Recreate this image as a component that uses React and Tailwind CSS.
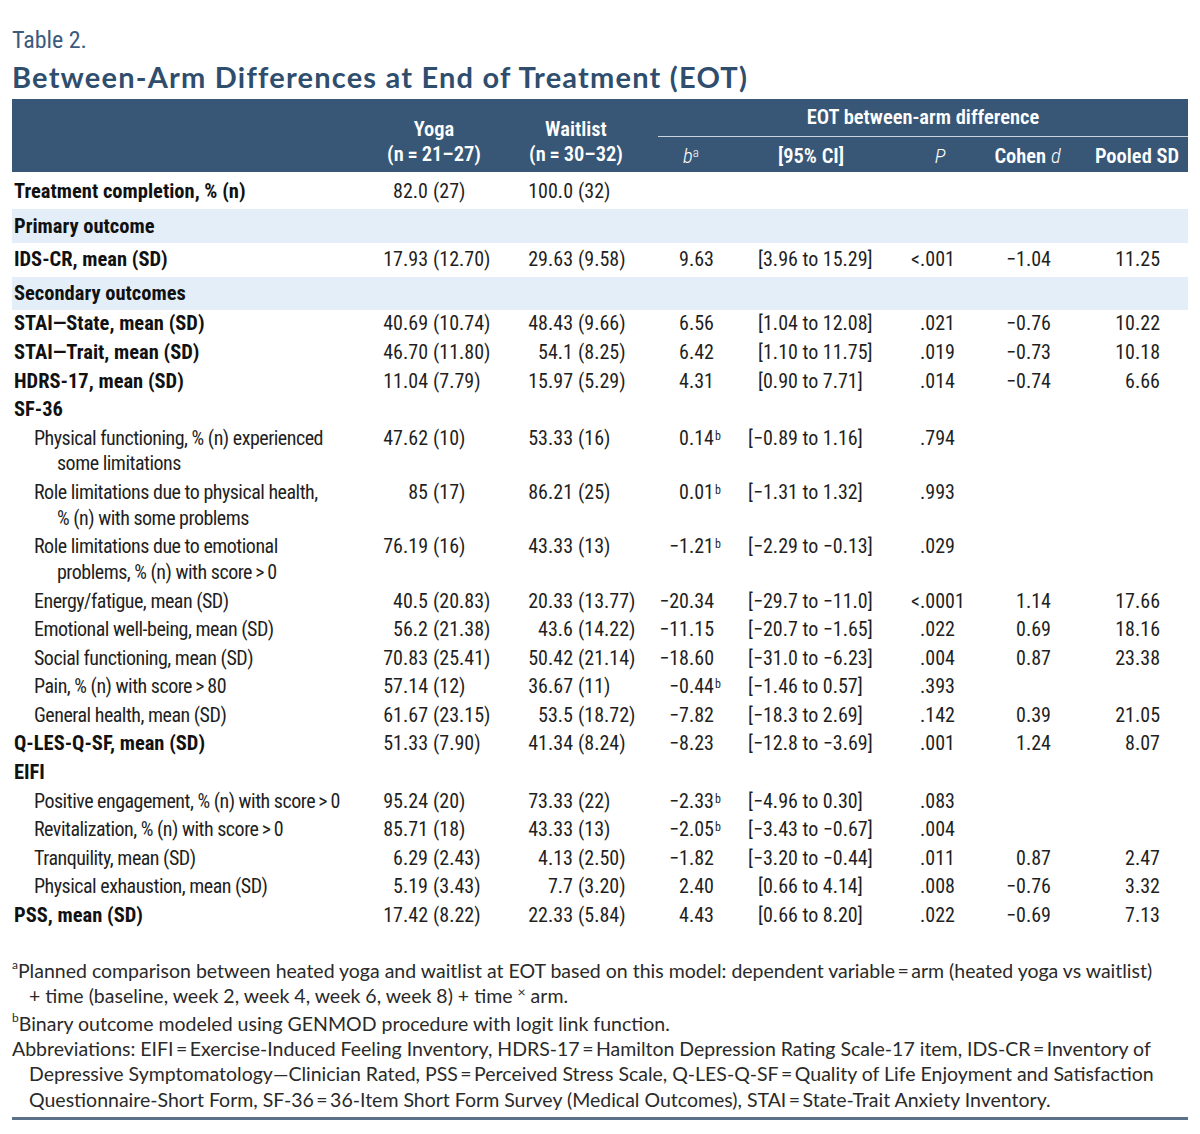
/*
  Table 2: between-arm differences at end of treatment (EOT)
  One grid template shared by header and body rows so every column lines up.
*/

const COLS = "grid grid-cols-[358px_145px_140px_80px_160px_90px_85px_118px]";
const T = "\u2009"; // thin space used around = and >

const ROWS = [
  { kind: "row", h: "h-[37px] pt-[7px]", label: ["Treatment completion, % (n)"], bold: true, yoga: "82.0 (27)", wait: "100.0 (32)" },
  { kind: "band", h: "h-[34px]", label: "Primary outcome" },
  { kind: "row", h: "h-[34px] items-center", label: ["IDS-CR, mean (SD)"], bold: true, yoga: "17.93 (12.70)", wait: "29.63 (9.58)", b: "9.63", ci: "[3.96 to 15.29]", p: "<.001", d: "−1.04", sd: "11.25" },
  { kind: "band", h: "h-[33px]", label: "Secondary outcomes" },
  { kind: "row", label: ["STAI—State, mean (SD)"], bold: true, yoga: "40.69 (10.74)", wait: "48.43 (9.66)", b: "6.56", ci: "[1.04 to 12.08]", p: ".021", d: "−0.76", sd: "10.22" },
  { kind: "row", label: ["STAI—Trait, mean (SD)"], bold: true, yoga: "46.70 (11.80)", wait: "54.1 (8.25)", b: "6.42", ci: "[1.10 to 11.75]", p: ".019", d: "−0.73", sd: "10.18" },
  { kind: "row", label: ["HDRS-17, mean (SD)"], bold: true, yoga: "11.04 (7.79)", wait: "15.97 (5.29)", b: "4.31", ci: "[0.90 to 7.71]", p: ".014", d: "−0.74", sd: "6.66" },
  { kind: "row", label: ["SF-36"], bold: true },
  { kind: "row", label: ["Physical functioning, % (n) experienced", "some limitations"], yoga: "47.62 (10)", wait: "53.33 (16)", b: "0.14^b", ci: "[−0.89 to 1.16]", p: ".794" },
  { kind: "row", label: ["Role limitations due to physical health,", "% (n) with some problems"], yoga: "85 (17)", wait: "86.21 (25)", b: "0.01^b", ci: "[−1.31 to 1.32]", p: ".993" },
  { kind: "row", label: ["Role limitations due to emotional", `problems, % (n) with score${T}>${T}0`], yoga: "76.19 (16)", wait: "43.33 (13)", b: "−1.21^b", ci: "[−2.29 to −0.13]", p: ".029" },
  { kind: "row", label: ["Energy/fatigue, mean (SD)"], yoga: "40.5 (20.83)", wait: "20.33 (13.77)", b: "−20.34", ci: "[−29.7 to −11.0]", p: "<.0001", d: "1.14", sd: "17.66" },
  { kind: "row", label: ["Emotional well-being, mean (SD)"], yoga: "56.2 (21.38)", wait: "43.6 (14.22)", b: "−11.15", ci: "[−20.7 to −1.65]", p: ".022", d: "0.69", sd: "18.16" },
  { kind: "row", label: ["Social functioning, mean (SD)"], yoga: "70.83 (25.41)", wait: "50.42 (21.14)", b: "−18.60", ci: "[−31.0 to −6.23]", p: ".004", d: "0.87", sd: "23.38" },
  { kind: "row", label: [`Pain, % (n) with score${T}>${T}80`], yoga: "57.14 (12)", wait: "36.67 (11)", b: "−0.44^b", ci: "[−1.46 to 0.57]", p: ".393" },
  { kind: "row", label: ["General health, mean (SD)"], yoga: "61.67 (23.15)", wait: "53.5 (18.72)", b: "−7.82", ci: "[−18.3 to 2.69]", p: ".142", d: "0.39", sd: "21.05" },
  { kind: "row", label: ["Q-LES-Q-SF, mean (SD)"], bold: true, yoga: "51.33 (7.90)", wait: "41.34 (8.24)", b: "−8.23", ci: "[−12.8 to −3.69]", p: ".001", d: "1.24", sd: "8.07" },
  { kind: "row", label: ["EIFI"], bold: true },
  { kind: "row", label: [`Positive engagement, % (n) with score${T}>${T}0`], yoga: "95.24 (20)", wait: "73.33 (22)", b: "−2.33^b", ci: "[−4.96 to 0.30]", p: ".083" },
  { kind: "row", label: [`Revitalization, % (n) with score${T}>${T}0`], yoga: "85.71 (18)", wait: "43.33 (13)", b: "−2.05^b", ci: "[−3.43 to −0.67]", p: ".004" },
  { kind: "row", label: ["Tranquility, mean (SD)"], yoga: "6.29 (2.43)", wait: "4.13 (2.50)", b: "−1.82", ci: "[−3.20 to −0.44]", p: ".011", d: "0.87", sd: "2.47" },
  { kind: "row", label: ["Physical exhaustion, mean (SD)"], yoga: "5.19 (3.43)", wait: "7.7 (3.20)", b: "2.40", ci: "[0.66 to 4.14]", p: ".008", d: "−0.76", sd: "3.32" },
  { kind: "row", label: ["PSS, mean (SD)"], bold: true, yoga: "17.42 (8.22)", wait: "22.33 (5.84)", b: "4.43", ci: "[0.66 to 8.20]", p: ".022", d: "−0.69", sd: "7.13" },
];

function MeanCell({ value }) {
  if (!value) return <div />;
  const [num, paren] = value.split(" ");
  return (
    <div className="flex">
      <span className="w-[58px] text-right">{num}</span>
      <span className="pl-[5px]">{paren}</span>
    </div>
  );
}

function BCell({ value }) {
  if (!value) return <div />;
  const [num, sup] = value.split("^");
  return (
    <div className="flex">
      <span className="w-[59px] text-right">{num}</span>
      {sup && <span className="text-[12px] leading-none pt-[4px] pl-[1px]">{sup}</span>}
    </div>
  );
}

function SplitCell({ value, prefixes, width }) {
  if (!value) return <div />;
  const prefix = prefixes.find((p) => value.startsWith(p)) || "";
  return (
    <div className="flex">
      <span className={width + " text-right"}>{prefix}</span>
      <span>{value.slice(prefix.length)}</span>
    </div>
  );
}

function Row({ row }) {
  const labelClass = row.bold
    ? "font-bold pl-[2px] text-[#111] text-[20.5px]"
    : "pl-[22px] text-[20px] tracking-[-0.5px]";
  return (
    <div className={COLS + " " + (row.h || "py-[1.45px]") + " leading-[25.7px] text-[#1f1f1f]"}>
      <div className={labelClass + " whitespace-nowrap"}>
        {row.label.map((line, i) => (
          <div key={i} className={i > 0 ? "pl-[23px]" : ""}>
            {line}
          </div>
        ))}
      </div>
      <MeanCell value={row.yoga} />
      <MeanCell value={row.wait} />
      <BCell value={row.b} />
      <SplitCell value={row.ci} prefixes={["[−", "["]} width="w-[28px]" />
      <SplitCell value={row.p} prefixes={["<"]} width="w-[25px]" />
      <div className="text-right pr-[19px]">{row.d}</div>
      <div className="text-right pr-[28px]">{row.sd}</div>
    </div>
  );
}

function Band({ row }) {
  return (
    <div className={row.h + " flex items-center bg-[#e3eef9] pl-[2px] font-bold text-[20.5px] text-[#111]"}>
      {row.label}
    </div>
  );
}

function Header() {
  return (
    <div className={COLS + " grid-rows-[38px_35px] bg-[#385776] text-white text-[20.5px] leading-[25px]"}>
      <div className="row-span-2" />
      <div className="row-span-2 flex flex-col items-center justify-end pb-[5px] pr-[17px] font-semibold">
        <span>Yoga</span>
        <span>(n{T}={T}21–27)</span>
      </div>
      <div className="row-span-2 flex flex-col items-center justify-end pb-[5px] pr-[18px] font-semibold">
        <span>Waitlist</span>
        <span>(n{T}={T}30–32)</span>
      </div>
      <div className="col-span-5 ml-[3px] flex items-center justify-center border-b border-[#c9d4df] font-semibold">
        EOT between-arm difference
      </div>
      <div className="flex items-center justify-center pt-[4px] pr-[8px] italic font-light">
        b<span className="text-[13px] leading-none -mt-[8px] not-italic">a</span>
      </div>
      <div className="flex items-center justify-center pt-[4px] pr-[8px] font-semibold">[95% CI]</div>
      <div className="flex items-center justify-center pt-[4px] italic font-light">P</div>
      <div className="flex items-center justify-center pt-[4px] font-semibold">
        Cohen&nbsp;<span className="italic font-light">d</span>
      </div>
      <div className="flex items-center justify-center pt-[4px] pl-[16px] font-semibold">Pooled SD</div>
    </div>
  );
}

function Sup({ children }) {
  return <span className="text-[12px] align-top leading-[14px]">{children}</span>;
}

function Footnotes() {
  return (
    <div className="mt-[28px] font-['Lato',sans-serif] text-[19.5px] leading-[25.3px] text-[#2a2a2a] whitespace-nowrap">
      <div>
        <Sup>a</Sup>Planned comparison between heated yoga and waitlist at EOT based on this model: dependent variable{T}={T}arm (heated yoga vs waitlist)
      </div>
      <div className="pl-[17px]">
        + time (baseline, week 2, week 4, week 6, week 8) + time <span className="relative -top-[6px] text-[14px]">×</span> arm.
      </div>
      <div>
        <Sup>b</Sup>Binary outcome modeled using GENMOD procedure with logit link function.
      </div>
      <div>
        Abbreviations: EIFI{T}={T}Exercise-Induced Feeling Inventory, HDRS-17{T}={T}Hamilton Depression Rating Scale-17 item, IDS-CR{T}={T}Inventory of
      </div>
      <div className="pl-[17px]">
        Depressive Symptomatology—Clinician Rated, PSS{T}={T}Perceived Stress Scale, Q-LES-Q-SF{T}={T}Quality of Life Enjoyment and Satisfaction
      </div>
      <div className="pl-[17px]">
        Questionnaire-Short Form, SF-36{T}={T}36-Item Short Form Survey (Medical Outcomes), STAI{T}={T}State-Trait Anxiety Inventory.
      </div>
    </div>
  );
}

export default function App() {
  return (
    <div className="w-[1200px] h-[1134px] bg-white px-[12px] font-['Roboto_Condensed',sans-serif]">
      <div className="pt-[26px] text-[24px] leading-[28px] text-[#3b5b7e]">Table 2.</div>
      <h1 className="pt-[7px] pb-[6px] font-['Lato',sans-serif] font-bold text-[29px] tracking-[1.2px] leading-[32px] text-[#2f4e6e]">
        Between-Arm Differences at End of Treatment (EOT)
      </h1>
      <Header />
      <div className="text-[20px]">
        {ROWS.map((row, i) =>
          row.kind === "band" ? <Band key={i} row={row} /> : <Row key={i} row={row} />
        )}
      </div>
      <Footnotes />
      <div className="mt-[5px] h-[3px] bg-[#5c7189]" />
    </div>
  );
}
